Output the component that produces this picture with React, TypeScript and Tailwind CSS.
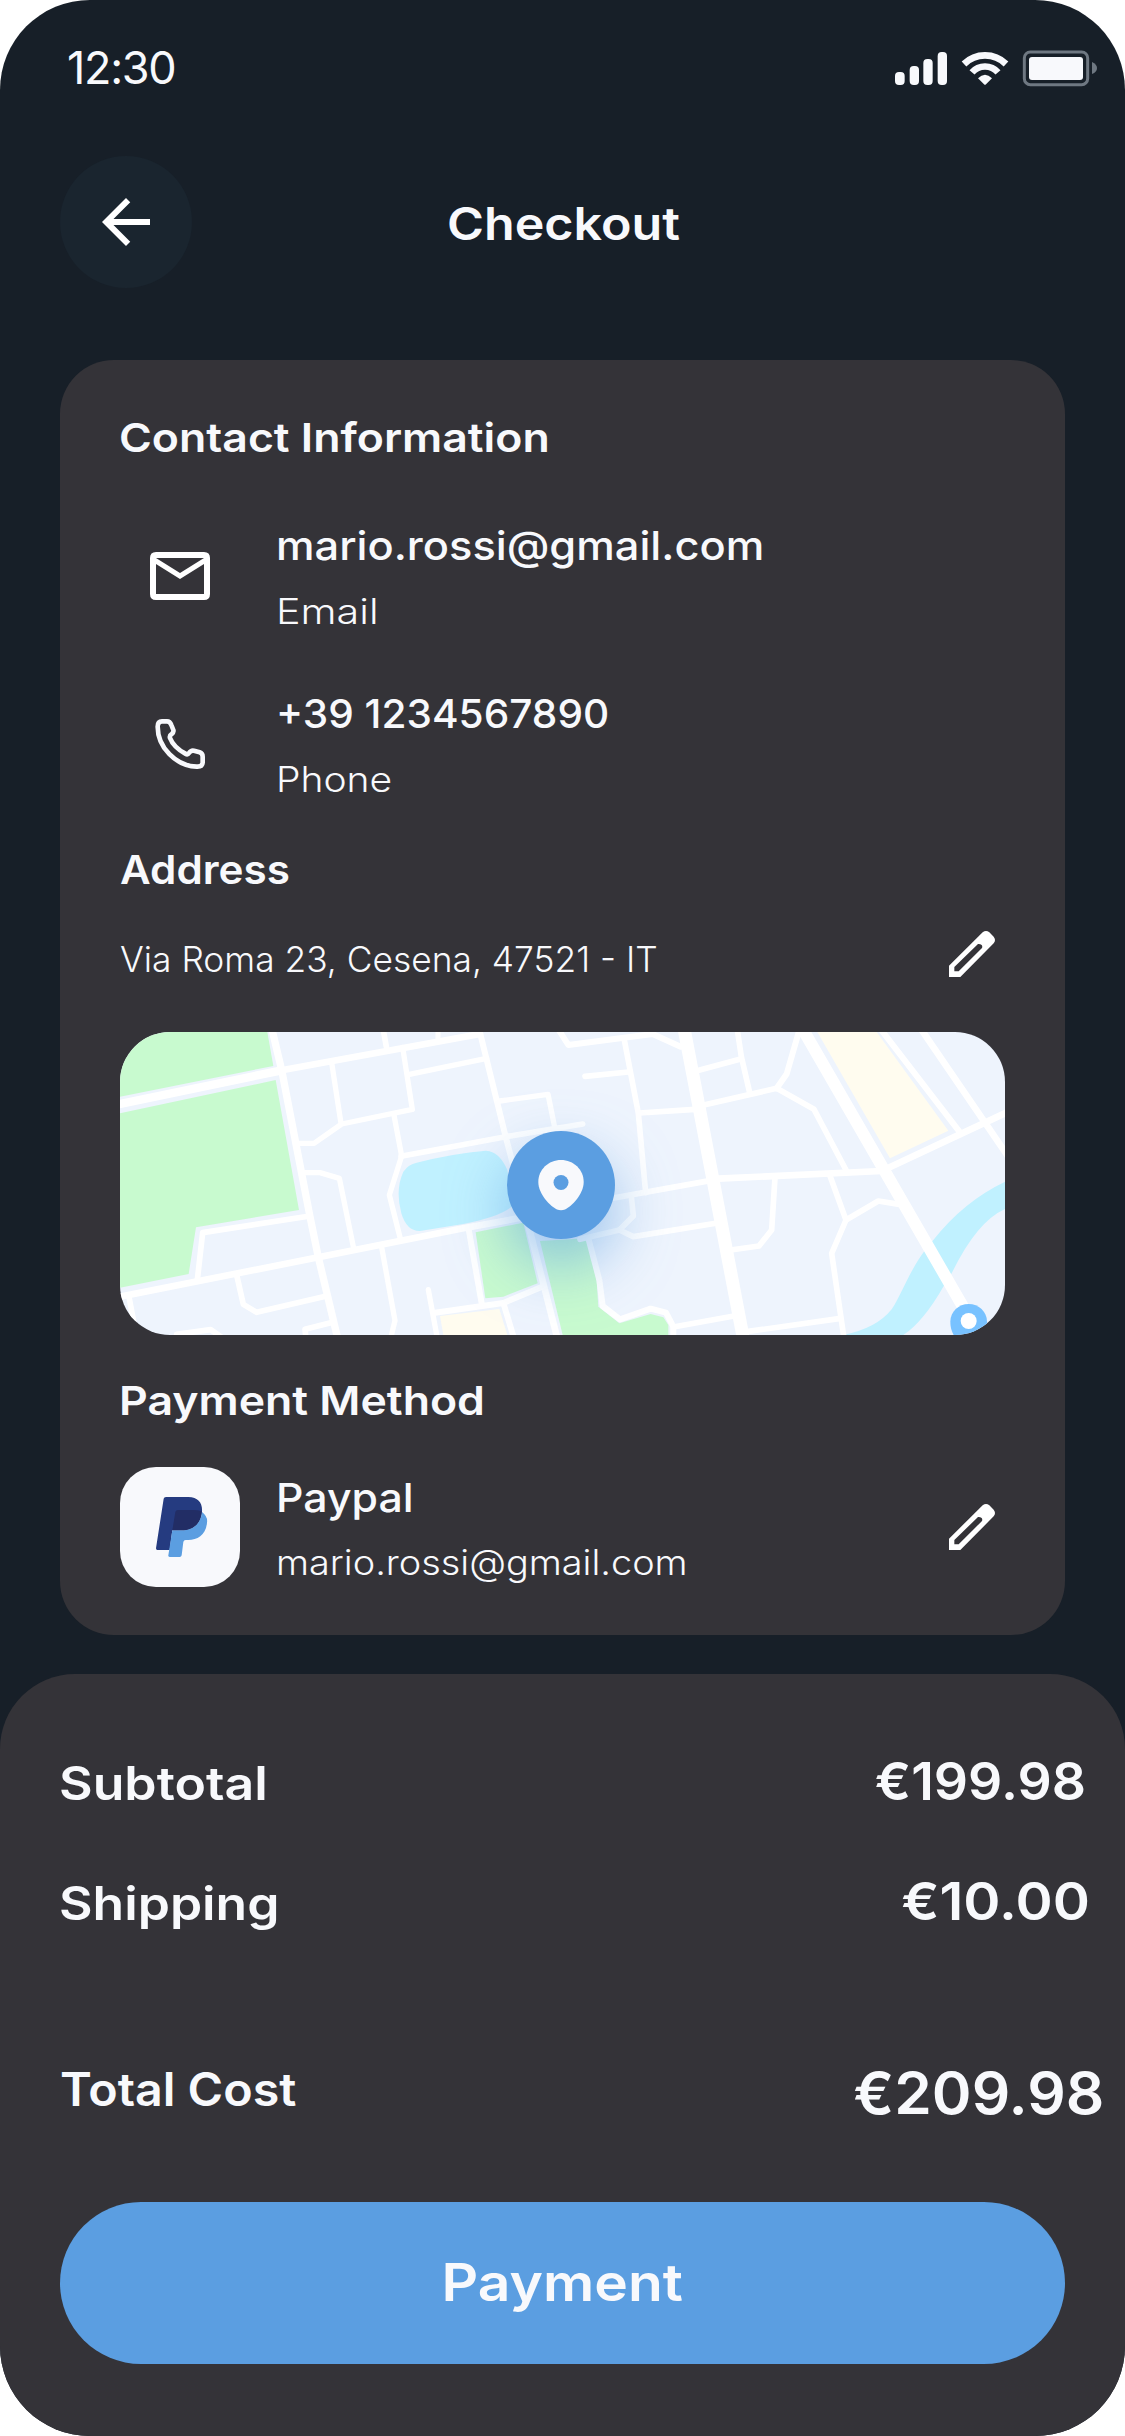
import type { ReactNode } from "react";

function StatusIcons() {
  return (
    <svg className="h-[42px] w-[210px]" viewBox="90 54 630 126" fill="#f8f9fc">
      <rect x="105" y="126" width="29" height="39" rx="12" />
      <rect x="149" y="108" width="28" height="57" rx="12" />
      <rect x="190" y="87" width="28" height="78" rx="12" />
      <rect x="233" y="66" width="28" height="99" rx="12" />
      <path d="M312 102 A90 90 0 0 1 438 102" fill="none" stroke="#f8f9fc" strokeWidth="20" />
      <path d="M336 127 A52 52 0 0 1 414 127" fill="none" stroke="#f8f9fc" strokeWidth="20" />
      <path d="M354 145 Q375 124 396 145 L378 163 Q375 166 372 163 Z" />
      <rect x="493" y="66" width="190" height="98" rx="18" fill="none" stroke="#6f7882" strokeWidth="9" />
      <rect x="507" y="81" width="162" height="69" rx="9" />
      <path d="M696 96 Q711 103 711 114 Q711 126 696 132 Z" fill="#6f7882" />
    </svg>
  );
}

function MailIcon() {
  return (
    <svg className="h-[48px] w-[60px]" viewBox="0 0 60 48" fill="#fff">
      <path
        fillRule="evenodd"
        d="M6 0H54Q60 0 60 6V42Q60 48 54 48H6Q0 48 0 42V6Q0 0 6 0ZM6 6V42H54V12L30 27L6 12V6ZM6 6L30 21L54 6Z"
      />
    </svg>
  );
}

function PhoneIcon() {
  return (
    <svg className="h-[60px] w-[60px]" viewBox="60 552 180 180" fill="none" stroke="#f8f9fc" strokeWidth="14" strokeLinejoin="round">
      <path d="M96 574H111Q120 574 124 585L130 600Q132 607 125 612Q118 616 120 624C128 645 146 660 166 671Q173 675 177 669Q183 660 192 662L209 667Q218 670 218 680V698Q217 711 200 710C138 708 83 652 83 590Q83 574 96 574Z" />
    </svg>
  );
}

function PencilIcon() {
  return (
    <svg className="h-[46px] w-[46px]" viewBox="87 63 138 138" fill="#fff">
      <path
        fillRule="evenodd"
        d="M87 167L188 67Q198 59 208 67L221 80Q229 90 221 100L121 201H87ZM103 171V184H116L186 114Q188 109 185 105Q180 101 174 102Z"
      />
    </svg>
  );
}

function PaypalLogo() {
  return (
    <svg className="h-[120px] w-[120px]" viewBox="30 51 360 360">
      <path fill="#253b80" d="M161 146Q162 141 168 141H235C265 141 278 160 276 185C272 225 245 241 215 241H187L179 300H142Q138 300 138 295Z" />
      <path fill="#5b9ee1" d="M276 186Q294 200 291 218C288 255 262 270 235 270H227Q221 270 220 276L215 316Q214 321 209 321H179Q174 321 175 316L187 241H215C245 241 272 225 276 186Z" />
      <path fill="#222d65" d="M196 186Q197 180 204 180H250Q265 180 275 184C273 225 245 241 215 241H187Z" />
    </svg>
  );
}

const leftRoads: [string, number][] = [
  ["M20 254L515 151", 25],
  ["M515 151L1110 42", 20],
  ["M484 20L515 150L600 590L625 712L683 955", 22],
  ["M30 830L625 712L1060 625L1240 592", 20],
  ["M600 588L278 638L262 780", 17],
  ["M380 765L400 853L440 877L650 828", 17],
  ["M56 826L72 910", 17],
  ["M200 943L302 929L332 950", 17],
  ["M668 907L585 928L588 955", 17],
  ["M665 128L693 310", 16],
  ["M568 370H612L695 312L907 268L878 82", 16],
  ["M820 30L829 80", 17],
  ["M984 30V60", 15],
  ["M898 163L1130 115", 16],
  ["M1108 30L1187 350L1212 445", 18],
  ["M1170 243L1314 223L1334 322", 16],
  ["M873 409L1187 350L1418 312", 17],
  ["M852 286L875 408L838 525L872 660", 16],
  ["M583 458H630L688 475L732 690", 16],
  ["M815 682L855 902L842 955", 16],
  ["M1076 628L1115 850", 18],
  ["M955 809L982 955", 16],
  ["M975 878L1180 849L1302 798", 18],
  ["M1180 849L1212 955", 18],
  ["M1250 595L1342 955", 20],
];

const rightRoads: [string, number][] = [
  ["M-10 20L25 75L278 42L362 80", 18],
  ["M192 55L235 280L257 518", 17],
  ["M75 169L205 156", 17],
  ["M238 279L405 268", 17],
  ["M371 20L550 955", 39],
  ["M408 153L542 117", 17],
  ["M532 30L544 110L570 222", 17],
  ["M428 256L650 205L762 268L858 450", 17],
  ["M718 30L680 162L650 205", 18],
  ["M724 20L1216 872", 36],
  ["M475 476L965 453L1345 275", 20],
  ["M964 30L1200 337", 18],
  ["M1085 30L1345 410", 20],
  ["M150 536L450 482", 18],
  ["M214 530L220 588L178 630L60 658", 17],
  ["M178 630L220 650L472 609", 17],
  ["M645 472L635 630L597 678L512 690", 17],
  ["M808 462L858 600L955 543L1018 553", 17],
  ["M858 600L815 700L852 955", 17],
  ["M340 921L522 888", 17],
  ["M560 935L842 895", 17],
  ["M340 955V920L318 878L272 866L180 898L128 858L118 780L85 655", 18],
];

function CityMap() {
  return (
    <svg className="block h-[303px] w-[885px]" viewBox="30 36 2655 909" fill="none" strokeLinecap="round" strokeLinejoin="round">
      <path fill="#eef4fd" d="M30 36H2685V945H30Z" />
      <g fill="#c8facf">
        <path d="M30 36H472L490 138L30 230Z" />
        <path d="M30 280L497 180L567 570L258 622L236 762L30 803Z" />
        <path d="M1097 637L1240 608L1283 790L1180 830L1126 835Z" />
        <path d="M1290 663L1430 655L1460 780L1465 860L1528 910L1622 882L1660 892L1675 915V945H1358Z" />
      </g>
      <g fill="#fffcef">
        <path d="M990 888L1168 867L1192 945H1000Z" />
        <path d="M2122 36H2300L2515 332L2340 415Z" />
      </g>
      <g fill="#c0f1ff">
        <path d="M920 428Q1030 400 1128 392Q1168 394 1192 450Q1202 500 1205 560Q1170 590 1060 612L930 633Q890 634 874 580Q855 510 880 455Q895 433 920 428Z" />
        <path d="M2200 945Q2300 925 2345 868C2380 815 2400 740 2470 660Q2560 545 2685 485V567Q2600 605 2525 760L2500 800Q2440 905 2380 945Z" />
      </g>
      <g stroke="#fff">
        {leftRoads.map(([d, w]) => (
          <path key={d} d={d} strokeWidth={w} />
        ))}
        <g transform="translate(1350 0)">
          {rightRoads.map(([d, w]) => (
            <path key={d} d={d} strokeWidth={w} />
          ))}
        </g>
      </g>
      <path fill="#78c2ff" d="M2576 852C2606 852 2631 875 2631 905C2631 925 2625 940 2615 955H2537C2527 940 2521 925 2521 905C2521 875 2546 852 2576 852Z" />
      <circle cx="2576" cy="903" r="24" fill="#fff" />
    </svg>
  );
}

function ContactRow({ icon, value, label }: { icon: ReactNode; value: ReactNode; label: ReactNode }) {
  return (
    <div className="flex h-[103px]">
      <div className="flex w-[120px] items-center justify-center pb-[3px]">{icon}</div>
      <div className="ml-[36px] flex flex-col items-start justify-between">
        {value}
        {label}
      </div>
    </div>
  );
}

export default function App() {
  return (
    <div className="h-[2436px] w-[1125px] bg-white">
      <div className="flex h-full w-full flex-col overflow-hidden rounded-[90px] bg-[#171f28] font-['Inter',sans-serif] whitespace-nowrap text-[#f8f9fc]">
        <div className="flex h-[156px] items-start justify-between pr-[25px] pl-[67px]">
          <div className="mt-[45px] text-[45px] leading-[45px] tracking-[-1.3px]">12:30</div>
          <div className="mt-[48px]">
            <StatusIcons />
          </div>
        </div>

        <header className="flex h-[132px] px-[60px]">
          <button className="flex size-[132px] items-center justify-center rounded-full bg-[#1a252f]">
            <svg className="size-[72px]" viewBox="0 0 24 24" fill="#fff">
              <path d="M20 11H7.83l5.59-5.59L12 4l-8 8 8 8 1.41-1.41L7.83 13H20v-2z" />
            </svg>
          </button>
          <h1 className="mt-[45px] ml-[255px] origin-left scale-x-[1.115] text-[45px] leading-[45px] font-semibold">Checkout</h1>
        </header>

        <section className="mx-[60px] mt-[72px] flex h-[1275px] flex-col items-start rounded-[54px] bg-[#343338] px-[60px] pt-[58px]">
          <h2 className="-ml-[1px] origin-left scale-x-[1.115] text-[40px] leading-[40px] font-semibold">Contact Information</h2>
          <div className="mt-[68px] flex flex-col gap-[65px]">
            <ContactRow
              icon={<MailIcon />}
              value={<div className="origin-left scale-x-[1.085] text-[40px] leading-[40px] font-medium">mario.rossi@gmail.com</div>}
              label={<div className="origin-left scale-x-[1.18] text-[35px] leading-[35px] font-light">Email</div>}
            />
            <ContactRow
              icon={<PhoneIcon />}
              value={<div className="origin-left scale-x-[1.015] text-[40px] leading-[40px] font-medium">+39 1234567890</div>}
              label={<div className="origin-left scale-x-[1.115] text-[35px] leading-[35px] font-light">Phone</div>}
            />
          </div>

          <h2 className="mt-[53px] origin-left scale-x-[1.055] text-[40px] leading-[40px] font-semibold">Address</h2>
          <div className="mt-[41px] flex h-[46px] w-[875px] items-end justify-between">
            <div className="origin-left scale-x-[1.01] text-[35px] leading-[35px] font-light">Via Roma 23, Cesena, 47521 - IT</div>
            <PencilIcon />
          </div>

          <div className="relative mt-[55px] h-[303px] w-[885px] overflow-hidden rounded-[50px]">
            <CityMap />
            <div className="absolute top-[99px] left-[387px] size-[108px] rounded-full bg-[#5b9ee1] shadow-[0_26px_60px_rgba(91,158,225,0.6)]">
              <svg className="size-[108px]" viewBox="0 0 108 108">
                <path fill="#f8f9fc" d="M54 29C66.5 29 76.7 38.6 76.7 51C76.7 63 65 75 58 78.5Q54 80 50 78.5C43 75 31.3 63 31.3 51C31.3 38.6 41.5 29 54 29Z" />
                <circle cx="54" cy="51.5" r="7.5" fill="#5b9ee1" />
              </svg>
            </div>
          </div>

          <h2 className="mt-[46px] -ml-[1px] origin-left scale-x-[1.115] text-[40px] leading-[40px] font-semibold">Payment Method</h2>
          <div className="mt-[46px] flex h-[120px] w-[875px]">
            <div className="size-[120px] overflow-hidden rounded-[36px] bg-[#f8f9fc]">
              <PaypalLogo />
            </div>
            <div className="mt-[11px] ml-[36px] flex flex-1 flex-col items-start gap-[27px]">
              <div className="origin-left scale-x-[1.07] text-[40px] leading-[40px] font-medium">Paypal</div>
              <div className="origin-left scale-x-[1.082] text-[35px] leading-[35px] font-light">mario.rossi@gmail.com</div>
            </div>
            <div className="mt-[37px]">
              <PencilIcon />
            </div>
          </div>
        </section>

        <section className="mt-[39px] flex h-[762px] flex-col rounded-t-[75px] bg-[#343338] pt-[82px] pl-[60px] font-semibold">
          <div className="-ml-[1px] flex h-[52px] items-baseline justify-between pr-[39px]">
            <span className="origin-left scale-x-[1.125] text-[46px] leading-[46px]">Subtotal</span>
            <span className="origin-right scale-x-[1.03] text-[52px] leading-[52px]">€199.98</span>
          </div>
          <div className="mt-[68px] -ml-[1px] flex h-[52px] items-baseline justify-between pr-[35px]">
            <span className="origin-left scale-x-[1.122] text-[46px] leading-[46px]">Shipping</span>
            <span className="origin-right scale-x-[1.085] text-[52px] leading-[52px]">€10.00</span>
          </div>
          <div className="mt-[136px] flex h-[58px] items-start justify-between pr-[21px]">
            <span className="mt-[2px] origin-left scale-x-[1.052] text-[46px] leading-[46px]">Total Cost</span>
            <span className="origin-right scale-x-[1.04] text-[58px] leading-[58px]">€209.98</span>
          </div>
          <button className="mt-[80px] flex h-[162px] w-[1005px] items-center justify-center rounded-full bg-[#5b9ee1]">
            <span className="pb-[1px] scale-x-[1.095] text-[52px] leading-[52px]">Payment</span>
          </button>
        </section>
      </div>
    </div>
  );
}
